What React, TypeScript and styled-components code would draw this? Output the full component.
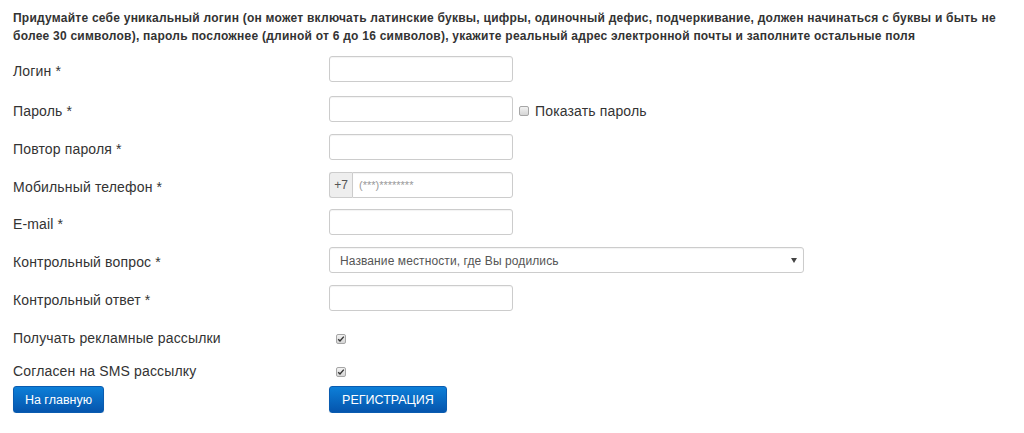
import React from 'react'
import styled, { createGlobalStyle } from 'styled-components'

const GlobalStyle = createGlobalStyle`
    body {
        margin: 0;
        background: #fff;
        font-family: "Liberation Sans", Arial, sans-serif;
        color: #333;
    }
`

const Page = styled.div`
    padding: 9px 10px 0 13px;
`

const Intro = styled.p`
    margin: 0 0 11px 0;
    font-size: 12px;
    font-weight: bold;
    line-height: 18px;
    letter-spacing: 0.24px;
    color: #333;
`

const Row = styled.div<{ $top?: number }>`
    display: grid;
    grid-template-columns: 316px auto;
    align-items: center;
    height: 26px;
    margin-top: ${p => (p.$top ?? 12)}px;
`

const Label = styled.label`
    padding-top: 4px;
    font-size: 14px;
    letter-spacing: 0.15px;
    color: #333;
`

const Field = styled.div`
    display: flex;
    align-items: center;
`

const Input = styled.input<{ $w?: number }>`
    box-sizing: border-box;
    width: ${p => p.$w ?? 184}px;
    height: 26px;
    border: 1px solid #ccc;
    border-radius: 3px;
    padding: 0 8px;
    font-family: inherit;
    font-size: 12px;
    color: #555;
    box-shadow: inset 0 1px 1px rgba(0, 0, 0, 0.05);
    outline: none;

    &::placeholder {
        color: #999;
    }
`

const PhoneGroup = styled.div`
    display: flex;
    width: 184px;
    height: 26px;
`

const Addon = styled.span`
    box-sizing: border-box;
    width: 23px;
    height: 26px;
    display: flex;
    align-items: center;
    justify-content: center;
    font-size: 12px;
    color: #555;
    background: #eee;
    border: 1px solid #ccc;
    border-right: none;
    border-radius: 3px 0 0 3px;
`

const PhoneInput = styled(Input)`
    flex: 1;
    width: auto;
    border-radius: 0 3px 3px 0;
    padding-left: 6px;
    font-size: 11px;
`

const Select = styled.div`
    box-sizing: border-box;
    width: 475px;
    height: 26px;
    border: 1px solid #ccc;
    border-radius: 3px;
    display: flex;
    align-items: center;
    justify-content: space-between;
    padding: 1px 6px 0 10px;
    font-size: 12px;
    letter-spacing: 0.1px;
    color: #555;
    box-shadow: inset 0 1px 1px rgba(0, 0, 0, 0.05);
`

const Arrow = styled.span`
    width: 0;
    height: 0;
    border-left: 3px solid transparent;
    border-right: 3px solid transparent;
    border-top: 5px solid #444;
`

const Box = styled.span`
    box-sizing: border-box;
    width: 10px;
    height: 10px;
    border: 1px solid #a6a6a6;
    border-radius: 2px;
    background: linear-gradient(#f2f2f2, #d6d6d6);
    display: inline-flex;
    align-items: center;
    justify-content: center;
`

const CheckWrap = styled.div`
    padding-left: 7px;
    padding-top: 5px;
    display: flex;
    align-items: center;
`

const ShowPassword = styled.label`
    display: flex;
    align-items: center;
    margin-left: 6px;
    padding-top: 3px;
    gap: 6px;
    font-size: 14px;
    letter-spacing: 0.15px;
    color: #333;
`

const Buttons = styled.div`
    display: grid;
    grid-template-columns: 316px auto;
    margin-top: 4px;
`

const Button = styled.button<{ $w: number }>`
    width: ${p => p.$w}px;
    height: 27px;
    border: 1px solid #0a5cb0;
    border-radius: 3px;
    background: linear-gradient(#0d7fd8, #0555ad);
    color: #fff;
    font-family: inherit;
    font-size: 12.5px;
    padding: 0;
    cursor: pointer;
    box-shadow: 0 1px 1px rgba(0, 0, 0, 0.15);
`

function Check({ checked }: { checked?: boolean }) {
    return (
        <Box>
            {checked && (
                <svg width="8" height="8" viewBox="0 0 8 8">
                    <path d="M1.2 4.2 L3 6 L6.8 1.6" fill="none" stroke="#333" strokeWidth="1.4" />
                </svg>
            )}
        </Box>
    )
}

export default function App() {
    return (
        <>
            <GlobalStyle />
            <Page>
                <Intro>
                    Придумайте себе уникальный логин (он может включать латинские буквы, цифры, одиночный дефис, подчеркивание, должен начинаться с буквы и быть не более 30 символов), пароль посложнее (длиной от 6 до 16 символов), укажите реальный адрес электронной почты и заполните остальные поля
                </Intro>
                <Row $top={0}>
                    <Label>Логин *</Label>
                    <Field><Input /></Field>
                </Row>
                <Row $top={14}>
                    <Label>Пароль *</Label>
                    <Field>
                        <Input type="password" />
                        <ShowPassword><Check />Показать пароль</ShowPassword>
                    </Field>
                </Row>
                <Row>
                    <Label>Повтор пароля *</Label>
                    <Field><Input type="password" /></Field>
                </Row>
                <Row>
                    <Label>Мобильный телефон *</Label>
                    <Field>
                        <PhoneGroup>
                            <Addon>+7</Addon>
                            <PhoneInput placeholder="(***)********" />
                        </PhoneGroup>
                    </Field>
                </Row>
                <Row $top={11}>
                    <Label>E-mail *</Label>
                    <Field><Input /></Field>
                </Row>
                <Row>
                    <Label>Контрольный вопрос *</Label>
                    <Field>
                        <Select>
                            Название местности, где Вы родились
                            <Arrow />
                        </Select>
                    </Field>
                </Row>
                <Row>
                    <Label>Контрольный ответ *</Label>
                    <Field><Input /></Field>
                </Row>
                <Row $top={12}>
                    <Label>Получать рекламные рассылки</Label>
                    <CheckWrap><Check checked /></CheckWrap>
                </Row>
                <Row $top={7}>
                    <Label>Согласен на SMS рассылку</Label>
                    <CheckWrap><Check checked /></CheckWrap>
                </Row>
                <Buttons>
                    <div><Button $w={91}>На главную</Button></div>
                    <div><Button $w={118}>РЕГИСТРАЦИЯ</Button></div>
                </Buttons>
            </Page>
        </>
    )
}
